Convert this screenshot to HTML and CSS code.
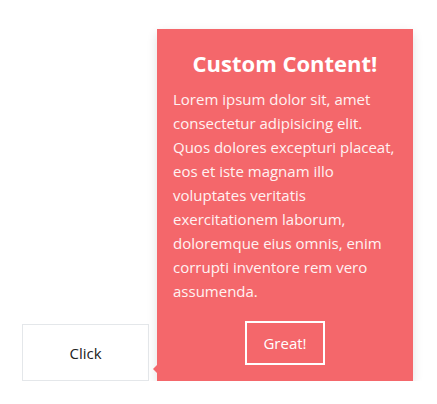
FILE: index.html
```html
<!DOCTYPE html>
<html lang="en">
<head>
  <meta charset="UTF-8" />
  <meta name="viewport" content="width=device-width, initial-scale=1.0"/>
  <title>popover</title>

  <link rel="stylesheet" href="styles.css">
</head>
<body>
  <div class="stage">
    <div class="popover-wrap">
      <button class="trigger">Click</button>
      <div class="popover">
        <h2>Custom Content!</h2>
        <p>Lorem ipsum dolor sit, amet consectetur adipisicing elit. Quos dolores excepturi placeat, eos et iste magnam illo voluptates veritatis exercitationem laborum, doloremque eius omnis, enim corrupti inventore rem vero assumenda.</p>
        <div class="popover-actions">
          <button class="popover-btn">Great!</button>
        </div>
      </div>
    </div>
  </div>
</body>
</html>
```

FILE: styles.css
```css
/* Reset & Base Styles */
* {
  box-sizing: border-box;
  margin: 0;
  padding: 0;
}

body {
  font-family: 'Segoe UI', 'Open Sans', sans-serif;
  background: #fff;
  color: #222;
}

.stage {
  padding: 324px 0 0 22px;
}

.popover-wrap {
  position: relative;
  width: 127px;
}

.trigger {
  display: block;
  width: 127px;
  height: 57px;
  background: #fff;
  border: 1px solid #e4e7ea;
  font-family: inherit;
  font-size: 15px;
  color: #222;
  cursor: pointer;
}

/* Popover */
.popover {
  position: absolute;
  left: 135px;
  bottom: 0;
  width: 256px;
  padding: 20px 16px 16px;
  background: #f4676b;
  color: #fff;
  box-shadow: 0 4px 10px rgba(0, 0, 0, 0.12);
}

.popover::before {
  content: '';
  position: absolute;
  left: -4px;
  bottom: 8px;
  border-top: 4px solid transparent;
  border-bottom: 4px solid transparent;
  border-right: 4px solid #f4676b;
}

.popover h2 {
  font-size: 22px;
  font-weight: bold;
  text-align: center;
  line-height: 1.3;
  margin-bottom: 9px;
}

.popover p {
  font-size: 15px;
  line-height: 24px;
  color: #fff2f2;
}

.popover-actions {
  display: flex;
  justify-content: center;
  margin-top: 18px;
}

.popover-btn {
  width: 80px;
  height: 44px;
  background: transparent;
  border: 2px solid #fff;
  color: #fff;
  font-family: inherit;
  font-size: 15px;
  cursor: pointer;
}
```
